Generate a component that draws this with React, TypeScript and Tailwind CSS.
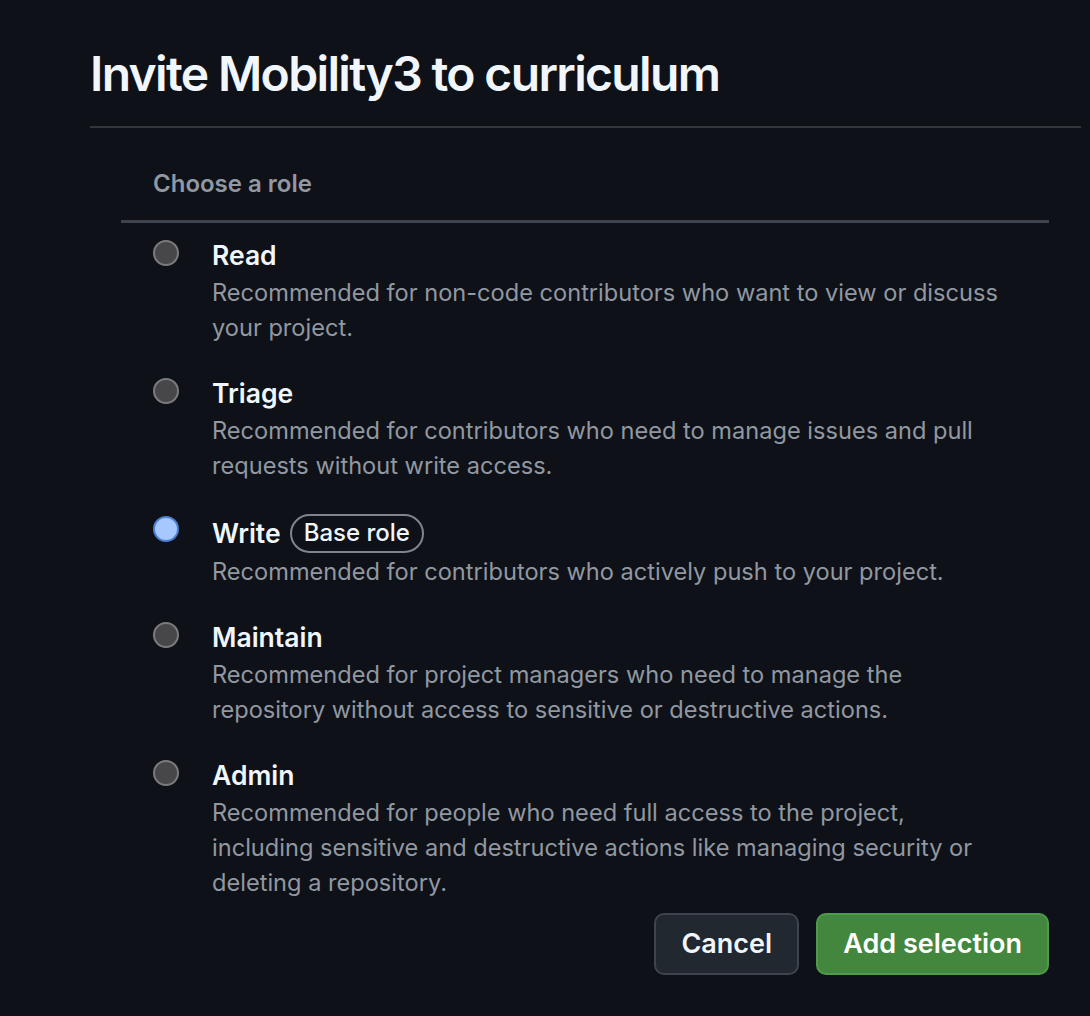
import React, { useState } from 'react';

type Role = {
  value: string;
  label: string;
  description: string;
  base?: boolean;
};

const roles: Role[] = [
  {
    value: 'read',
    label: 'Read',
    description: 'Recommended for non-code contributors who want to view or discuss your project.'
  },
  {
    value: 'triage',
    label: 'Triage',
    description: 'Recommended for contributors who need to manage issues and pull requests without write access.'
  },
  {
    value: 'write',
    label: 'Write',
    description: 'Recommended for contributors who actively push to your project.',
    base: true
  },
  {
    value: 'maintain',
    label: 'Maintain',
    description: 'Recommended for project managers who need to manage the repository without access to sensitive or destructive actions.'
  },
  {
    value: 'admin',
    label: 'Admin',
    description: 'Recommended for people who need full access to the project, including sensitive and destructive actions like managing security or deleting a repository.'
  }
];

export default function App() {
  const [role, setRole] = useState('write');

  return (
    <div className="min-h-[1016px] w-full bg-[#0e1117] pl-[90px] pr-[9px] pt-[44px] font-['Inter','Noto_Sans',sans-serif] antialiased">
      {/* Title */}
      <h1 className="text-[48px] font-semibold leading-[60px] tracking-[-1.65px] text-[#f0f6fc]">
        Invite Mobility3 to curriculum
      </h1>
      <div className="mt-[22px] h-[2px] w-full bg-[#33363b]" />

      {/* Role picker */}
      <div className="ml-[31px] mr-[32px] mt-[40px]">
        <div className="pl-[32px] text-[24px] font-semibold leading-[32px] text-[#9198a1]">Choose a role</div>
        <div className="mt-[20px] h-[3px] w-full bg-[#3d444d]" />

        <div className="flex flex-col gap-[29px] pl-[32px] pt-[13px]">
          {roles.map((r) => {
            const selected = role === r.value;
            return (
              <label key={r.value} className="flex cursor-pointer items-start gap-[33px]" onClick={() => setRole(r.value)}>
                <span
                  className={`mt-[4px] block h-[26px] w-[26px] shrink-0 rounded-full border-[2px] ${
                    selected ? 'border-[#4c7fcf] bg-[#a6c8ff]' : 'border-[#7b7b7d] bg-[#47474a]'
                  }`}
                />
                <div className="flex w-[790px] flex-col">
                  <div className={`flex items-center ${r.base ? 'h-[42px]' : 'h-[39px]'}`}>
                    <span className="text-[26.5px] font-semibold leading-[39px] text-[#f0f6fc]">{r.label}</span>
                    {r.base && (
                      <span className="ml-[9px] flex h-[39px] items-center rounded-full border-[2px] border-[#7d8590] px-[12px] text-[24px] font-medium text-[#f0f6fc]">
                        Base role
                      </span>
                    )}
                  </div>
                  <p className="text-[23.6px] leading-[35px] text-[#9198a1]">{r.description}</p>
                </div>
              </label>
            );
          })}
        </div>

        {/* Actions */}
        <div className="mt-[13px] flex justify-end gap-[17px]">
          <button className="h-[62px] rounded-[10px] border-[2px] border-[#3d444d] bg-[#212830] px-[25px] text-[27px] font-semibold text-[#f0f6fc]">
            Cancel
          </button>
          <button className="h-[62px] rounded-[10px] border-[2px] border-[#4f9a4b] bg-[#43873f] px-[25px] text-[27px] font-semibold text-white">
            Add selection
          </button>
        </div>
      </div>
    </div>
  );
}
